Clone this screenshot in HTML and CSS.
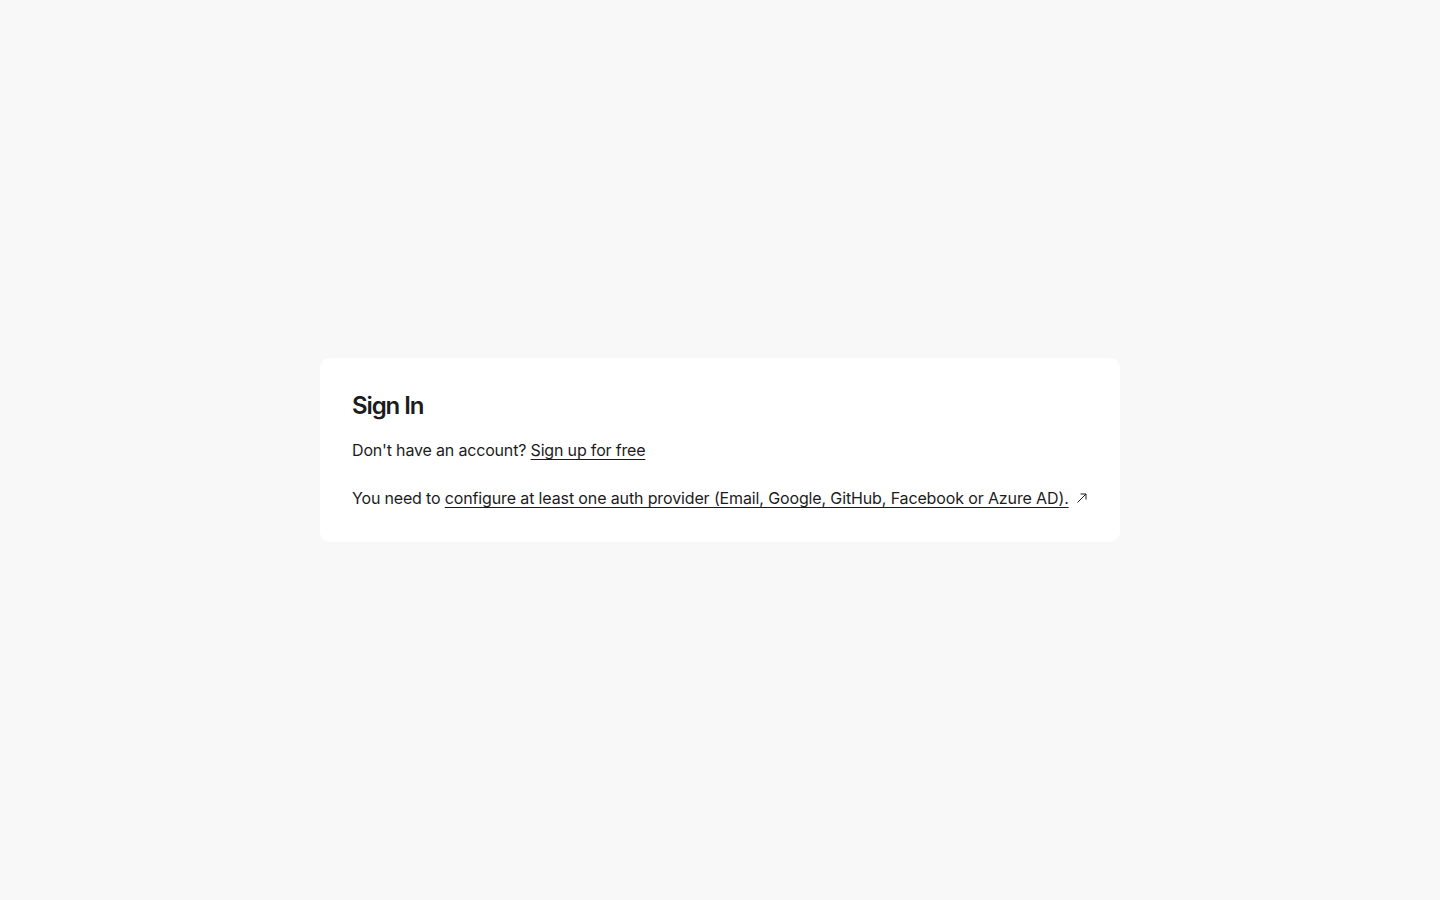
FILE: index.html
```html
<!DOCTYPE html>
<html lang="en">
<head>
<meta charset="utf-8">
<title>Sign In</title>
<link rel="stylesheet" href="styles.css">
</head>
<body>
<main class="page">
  <section class="card">
    <h1 class="title">Sign In</h1>
    <p class="line">Don't have an account? <a class="link" href="#">Sign up for free</a></p>
    <p class="line notice">You need to <a class="link" href="#">configure at least one auth provider (Email, Google, GitHub, Facebook or Azure AD).</a><svg class="ext" width="12" height="12" viewBox="0 0 12 12" aria-hidden="true"><path d="M1.5 10.5L10 2M4.5 2h5.5v5.5" fill="none" stroke="#1c1c1c" stroke-width="1"/></svg></p>
  </section>
</main>
</body>
</html>
```
FILE: styles.css
```css
* { box-sizing: border-box; }
html, body { margin: 0; padding: 0; }
body {
  background: #f8f8f8;
  font-family: Inter, "Noto Sans", sans-serif;
  color: #1c1c1c;
}
.page {
  min-height: 900px;
  display: flex;
  align-items: center;
  justify-content: center;
}
.card {
  width: 800px;
  background: #ffffff;
  border-radius: 10px;
  padding: 32px;
}
.title {
  margin: 0;
  font-size: 24px;
  line-height: 32px;
  font-weight: 600;
  letter-spacing: -1.1px;
}
.line {
  margin: 16px 0 0;
  font-size: 16px;
  line-height: 24px;
  letter-spacing: -0.17px;
}
.notice {
  margin-top: 24px;
  white-space: nowrap;
}
.notice .link { letter-spacing: -0.13px; }
.link {
  color: #1c1c1c;
  text-decoration: underline;
  text-underline-offset: 3px;
  text-decoration-thickness: 1px;
}
.ext {
  margin-left: 7px;
  vertical-align: 0px;
}
```
